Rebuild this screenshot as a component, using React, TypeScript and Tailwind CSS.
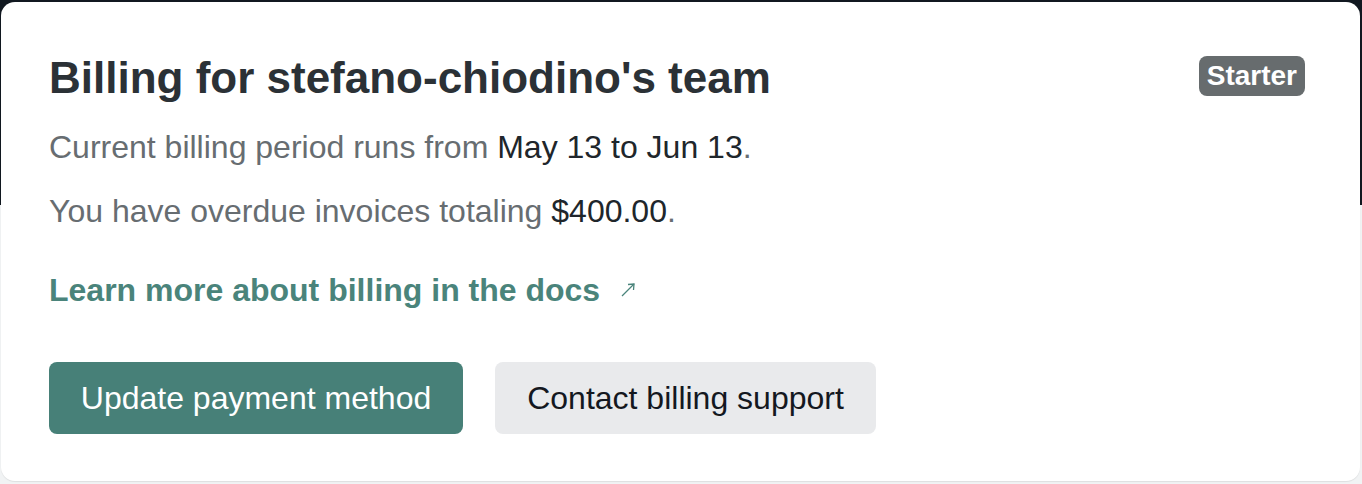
import React from "react";

const font = { fontFamily: '"Liberation Sans", Arial, sans-serif' };

function ExternalArrow() {
  return (
    <svg width="16" height="16" viewBox="0 0 16 16" className="text-[#4a847b]" fill="none" stroke="currentColor" strokeWidth="1.3">
      <path d="M2 14 L14 2" />
      <path d="M8 2.5 L14 2 L13.5 8" />
    </svg>
  );
}

export default function App() {
  return (
    <div
      className="h-[484px] w-full bg-[linear-gradient(to_bottom,#111820_205px,#f1f3f4_205px)] pt-[2px] pl-[1px] pr-[2px]"
      style={font}
    >
      <div className="flex h-[479px] flex-col rounded-[14px] bg-white px-[48px] pt-[48px] shadow-[0_1px_1px_rgba(0,0,0,0.08)]">
        {/* Header */}
        <div className="flex items-start justify-between">
          <h1 className="text-[44px] font-bold leading-[56px] text-[#2b3136]">
            Billing for stefano-chiodino's team
          </h1>
          <span className="mt-[6px] mr-[7px] rounded-[8px] bg-[#676c6e] px-[8px] py-[3px] text-[28px] font-bold leading-[34px] text-white">
            Starter
          </span>
        </div>

        {/* Details */}
        <p className="mt-[19px] text-[32px] leading-[44px] text-[#676d71]">
          Current billing period runs from <span className="text-[#20262b]">May 13 to Jun 13</span>.
        </p>
        <p className="mt-[20px] text-[32px] leading-[44px] text-[#676d71]">
          You have overdue invoices totaling <span className="text-[#20262b]">$400.00</span>.
        </p>

        {/* Docs link */}
        <a className="mt-[35px] flex items-center gap-[20px] text-[32px] font-bold leading-[44px] text-[#4a847b]">
          Learn more about billing in the docs
          <ExternalArrow />
        </a>

        {/* Actions */}
        <div className="mt-[50px] flex gap-[32px]">
          <button className="h-[72px] w-[414px] rounded-[8px] bg-[#478078] text-[32px] text-white">
            Update payment method
          </button>
          <button className="h-[72px] w-[381px] rounded-[8px] bg-[#e9eaec] text-[32px] text-[#14181f]">
            Contact billing support
          </button>
        </div>
      </div>
    </div>
  );
}
